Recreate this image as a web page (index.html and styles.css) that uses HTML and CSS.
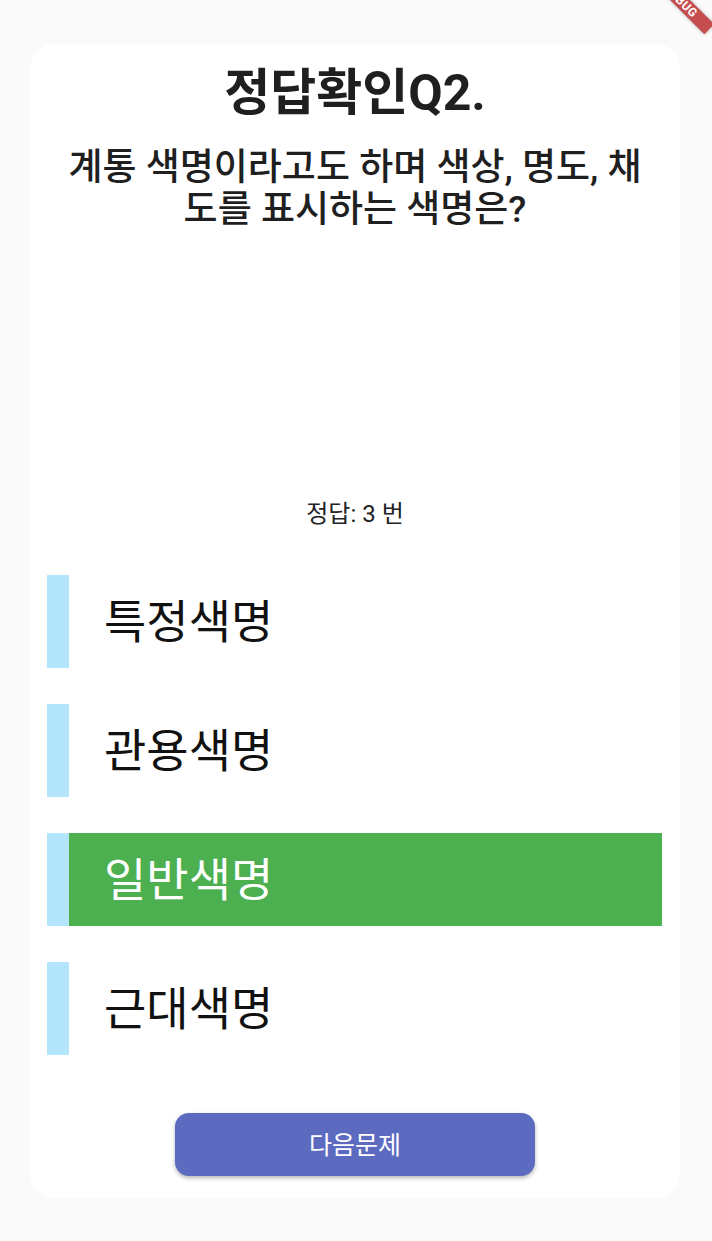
FILE: index.html
```html
<!DOCTYPE html>
<html lang="ko">
<head>
<meta charset="utf-8">
<title>정답확인</title>
<link rel="stylesheet" href="styles.css">
</head>
<body>
<div class="card">
  <h1 class="title">정답확인Q2.</h1>
  <p class="question">계통 색명이라고도 하며 색상, 명도, 채<br>도를 표시하는 색명은?</p>
  <div class="spacer"></div>
  <p class="answer">정답: 3 번</p>
  <div class="options">
    <div class="option"><span class="bar"></span><span class="label">특정색명</span></div>
    <div class="option"><span class="bar"></span><span class="label">관용색명</span></div>
    <div class="option correct"><span class="bar"></span><span class="label">일반색명</span></div>
    <div class="option"><span class="bar"></span><span class="label">근대색명</span></div>
  </div>
  <button class="next">다음문제</button>
</div>
<div class="debug-banner"><span>DEBUG</span></div>
</body>
</html>
```
FILE: styles.css
```css
html, body {
  margin: 0;
  padding: 0;
}
body {
  background: #fafafa;
  width: 712px;
  height: 1241px;
  overflow: hidden;
  position: relative;
  font-family: Roboto, "Noto Sans CJK KR", sans-serif;
  color: #1a1a1a;
}
.card {
  box-sizing: border-box;
  margin: 44px 32px 0 30px;
  height: 1154px;
  background: #ffffff;
  border-radius: 24px;
  display: flex;
  flex-direction: column;
  align-items: center;
  padding: 19px 0 22px;
}
.title {
  margin: 0;
  font-size: 50px;
  font-weight: 700;
  line-height: 60px;
  color: #1f1f1f;
}
.question {
  margin: 24px 0 0;
  font-size: 37px;
  font-weight: 500;
  line-height: 42px;
  text-align: center;
  color: #1f1f1f;
}
.spacer {
  flex: 1;
}
.answer {
  margin: 0 0 46px;
  font-size: 24px;
  line-height: 30px;
  color: #222;
}
.options {
  align-self: stretch;
  margin: 0 18px 0 17px;
  display: flex;
  flex-direction: column;
  gap: 36px;
}
.option {
  display: flex;
  height: 93px;
}
.bar {
  width: 22px;
  background: #b3e5fc;
  flex: none;
}
.label {
  flex: 1;
  display: flex;
  align-items: center;
  padding: 0 0 8px 35px;
  font-size: 46px;
  color: #111;
}
.option.correct .label {
  background: #4caf50;
  color: #ffffff;
}
.next {
  margin-top: 58px;
  width: 360px;
  height: 63px;
  border: none;
  border-radius: 14px;
  background: #5c6bc0;
  color: #ffffff;
  font-family: Roboto, "Noto Sans CJK KR", sans-serif;
  font-size: 25px;
  padding-bottom: 4px;
  box-shadow: 0 2px 4px rgba(0,0,0,0.3);
}
.debug-banner {
  position: absolute;
  left: 641px;
  top: -6px;
  width: 80px;
  height: 14px;
  background: rgba(183, 28, 28, 0.78);
  transform: rotate(45deg);
  display: flex;
  align-items: center;
  justify-content: center;
  box-shadow: 0 0 4px rgba(0,0,0,0.3);
}
.debug-banner span {
  font-family: Roboto, sans-serif;
  font-size: 12px;
  font-weight: 700;
  color: #fff;
  letter-spacing: 0.5px;
  line-height: 14px;
}
```
